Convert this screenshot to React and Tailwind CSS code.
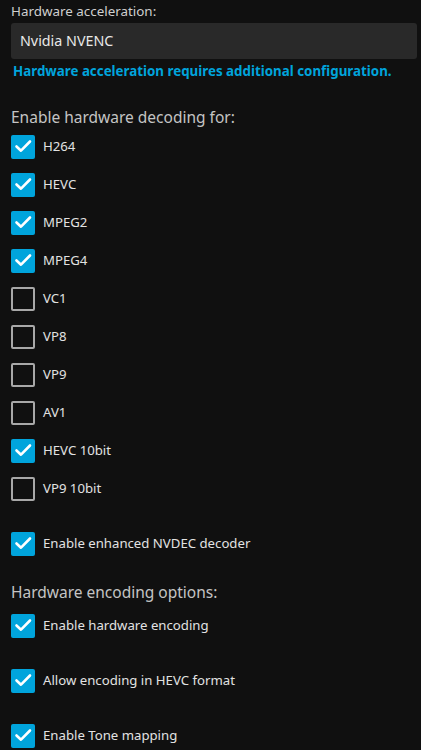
import React from 'react';

const decoders = [
  { name: 'H264', on: true },
  { name: 'HEVC', on: true },
  { name: 'MPEG2', on: true },
  { name: 'MPEG4', on: true },
  { name: 'VC1', on: false },
  { name: 'VP8', on: false },
  { name: 'VP9', on: false },
  { name: 'AV1', on: false },
  { name: 'HEVC 10bit', on: true },
  { name: 'VP9 10bit', on: false },
];

function Box({ on }) {
  if (on) {
    return (
      <span className="flex h-[24px] w-[24px] shrink-0 rounded-[2px] bg-[#00a4dc]">
        <svg width="24" height="24" viewBox="0 0 24 24" fill="none" stroke="#fff" strokeWidth="2.6" strokeLinecap="round" strokeLinejoin="round">
          <path d="M5.5 11.5l4.5 4.2L19 6.5" />
        </svg>
      </span>
    );
  }
  return <span className="h-[24px] w-[24px] shrink-0 rounded-[2px] border-2 border-[#a8a8a8]" />;
}

function Check({ label, on }) {
  return (
    <label className="flex h-[38px] items-center gap-[8px]">
      <Box on={on} />
      <span className="text-[13.2px] text-[#e2e2e2]">{label}</span>
    </label>
  );
}

export default function App() {
  return (
    <div className="min-h-[750px] overflow-hidden bg-[#101010] pl-[11px] font-['Noto_Sans',sans-serif]">
      <div className="pt-[2px] text-[13.4px] leading-[18px] text-[#cfcfcf]">Hardware acceleration:</div>
      <div className="mt-[3px] mr-[4px] flex h-[36px] items-center rounded-[3px] bg-[#292929] pl-[9px] text-[14.3px] text-[#e8e8e8]">
        Nvidia NVENC
      </div>
      <div className="mt-[3px] pl-[2px] text-[13.35px] font-bold leading-[18px] text-[#00a4dc]">
        Hardware acceleration requires additional configuration.
      </div>

      <h3 className="mt-[27px] text-[15.5px] leading-[20px] text-[#c4c4c4]">Enable hardware decoding for:</h3>
      <div className="mt-[1px] flex flex-col">
        {decoders.map((d) => (
          <Check key={d.name} label={d.name} on={d.on} />
        ))}
      </div>

      <div className="mt-[17px]">
        <Check label="Enable enhanced NVDEC decoder" on />
      </div>

      <h3 className="mt-[19px] text-[15.5px] leading-[20px] text-[#c4c4c4]">Hardware encoding options:</h3>
      <div className="mt-[5px] flex flex-col gap-[17px]">
        <Check label="Enable hardware encoding" on />
        <Check label="Allow encoding in HEVC format" on />
        <Check label="Enable Tone mapping" on />
      </div>
    </div>
  );
}
